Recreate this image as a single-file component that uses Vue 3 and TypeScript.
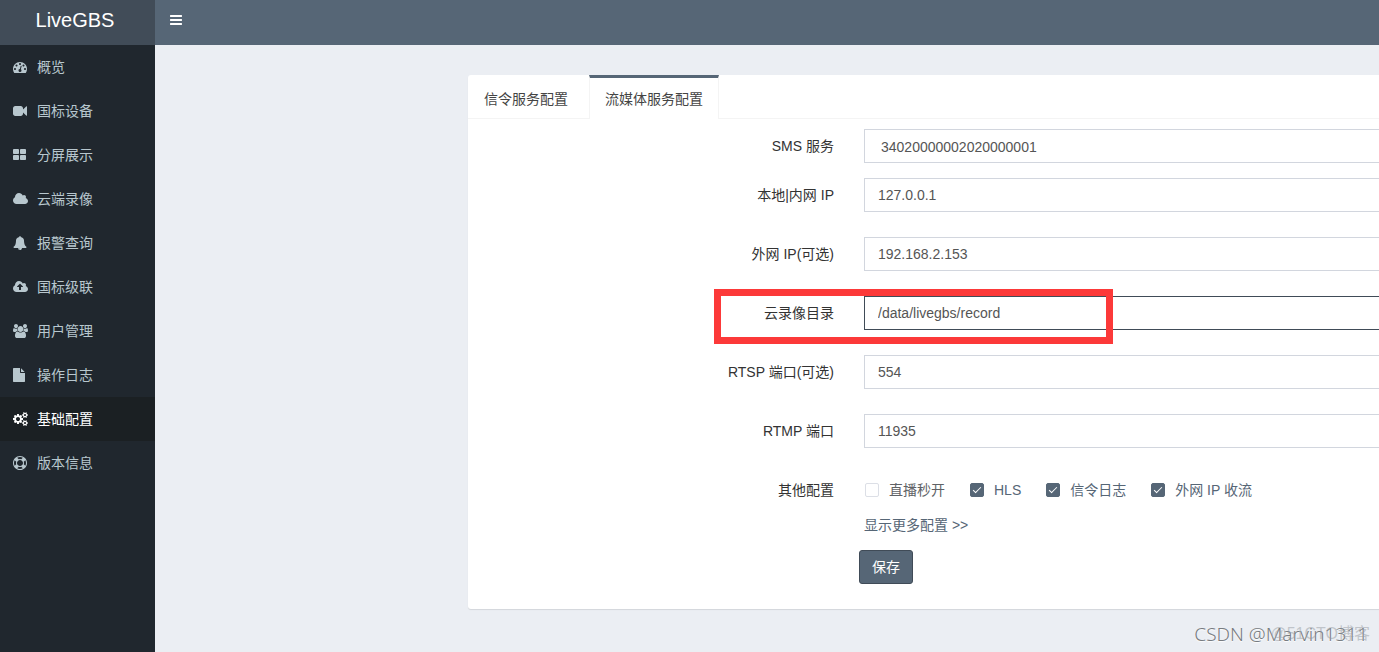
<script setup lang="ts">
import { reactive, ref } from 'vue'

interface MenuItem {
  label: string
  viewBox: string
  width: number
  path: string
}

const cloud =
  'M1984 1152q0 159-112.5 271.5t-271.5 112.5h-1088q-185 0-316.5-131.5t-131.5-316.5q0-132 71-241.5t187-163.5q-2-28-2-43 0-212 150-362t362-150q158 0 286.5 88t187.5 230q70-62 166-62 106 0 181 75t75 181q0 75-41 138 129 30 213 134.5t84 239.5z'
const smallCog =
  'v140q0 16-149 31-12 27-30 52 51 113 51 138 0 4-4 7-122 71-124 71-8 0-46-47t-52-68q-20 2-30 2t-30-2q-14 21-52 68t-46 47q-2 0-124-71-4-3-4-7 0-25 51-138-18-25-30-52-149-15-149-31v-140q0-16 149-31 13-29 30-52-51-113-51-138 0-4 4-7 4-2 35-20t59-34 30-16q8 0 46 46.500t52 67.500q20-2 30-2t30 2q51-71 92-112l6-2q4 0 124 70 4 3 4 7 0 25-51 138 17 23 30 52 149 15 149 31z'

const menu: MenuItem[] = [
  {
    label: '概览',
    viewBox: '0 0 1792 1792',
    width: 14,
    path: 'M384 1152q0-53-37.5-90.5t-90.5-37.5-90.5 37.5-37.5 90.5 37.5 90.5 90.5 37.5 90.5-37.5 37.5-90.5zm192-448q0-53-37.5-90.5t-90.5-37.5-90.5 37.5-37.5 90.5 37.5 90.5 90.5 37.5 90.5-37.5 37.5-90.5zm428 481l101-382q6-26-7.5-48.5t-38.5-29.5-48 6.5-30 39.5l-101 382q-60 5-107 43.5t-63 98.5q-20 77 20 146t117 89 146-20 89-117q16-60-6-117t-72-91zm660-33q0-53-37.5-90.5t-90.5-37.5-90.5 37.5-37.5 90.5 37.5 90.5 90.5 37.5 90.5-37.5 37.5-90.5zm-640-640q0-53-37.5-90.5t-90.5-37.5-90.5 37.5-37.5 90.5 37.5 90.5 90.5 37.5 90.5-37.5 37.5-90.5zm448 192q0-53-37.5-90.5t-90.5-37.5-90.5 37.5-37.5 90.5 37.5 90.5 90.5 37.5 90.5-37.5 37.5-90.5zm320 448q0 261-141 483-19 29-54 29h-1402q-35 0-54-29-141-221-141-483 0-182 71-348t191-286 286-191 348-71 348 71 286 191 191 286 71 348z',
  },
  {
    label: '国标设备',
    viewBox: '0 0 1792 1792',
    width: 14,
    path: 'M1792 352v1088q0 42-39 59-13 5-25 5-27 0-45-19l-403-403v166q0 119-84.5 203.5t-203.5 84.5h-704q-119 0-203.5-84.5t-84.5-203.5v-704q0-119 84.5-203.5t203.5-84.5h704q119 0 203.5 84.5t84.5 203.5v165l403-402q18-19 45-19 12 0 25 5 39 17 39 59z',
  },
  {
    label: '分屏展示',
    viewBox: '64 0 1792 1792',
    width: 14,
    path: 'M832 1024v384q0 52-38 90t-90 38h-512q-52 0-90-38t-38-90v-384q0-52 38-90t90-38h512q52 0 90 38t38 90zm0-768v384q0 52-38 90t-90 38h-512q-52 0-90-38t-38-90v-384q0-52 38-90t90-38h512q52 0 90 38t38 90zm896 768v384q0 52-38 90t-90 38h-512q-52 0-90-38t-38-90v-384q0-52 38-90t90-38h512q52 0 90 38t38 90zm0-768v384q0 52-38 90t-90 38h-512q-52 0-90-38t-38-90v-384q0-52 38-90t90-38h512q52 0 90 38t38 90z',
  },
  { label: '云端录像', viewBox: '64 0 1920 1792', width: 15, path: cloud },
  {
    label: '报警查询',
    viewBox: '0 0 1792 1792',
    width: 14,
    path: 'M912 1696q0-16-16-16-59 0-101.5-42.5t-42.5-101.5q0-16-16-16t-16 16q0 73 51.5 124.5t124.5 51.5q16 0 16-16zm816-288q0 52-38 90t-90 38h-448q0 106-75 181t-181 75-181-75-75-181h-448q-52 0-90-38t-38-90q50-42 91-88t85-119.5 74.5-158.5 50-206 19.5-260q0-152 117-282.5t307-158.5q-8-19-8-39 0-40 28-68t68-28 68 28 28 68q0 20-8 39 190 28 307 158.5t117 282.5q0 139 19.5 260t50 206 74.5 158.5 85 119.5 91 88z',
  },
  {
    label: '国标级联',
    viewBox: '64 0 1920 1792',
    width: 15,
    path:
      'M1344 864q0-14-9-23l-352-352q-9-9-23-9t-23 9l-351 351q-10 12-10 24 0 14 9 23t23 9h224v352q0 13 9.5 22.5t22.5 9.5h192q13 0 22.5-9.5t9.5-22.5v-352h224q13 0 22.5-9.5t9.5-22.5z' +
      cloud,
  },
  {
    label: '用户管理',
    viewBox: '64 0 1920 1792',
    width: 15,
    path: 'M657 896q-162 5-265 128h-134q-82 0-138-40.5t-56-118.5q0-353 124-353 6 0 43.5 21t97.5 42.5 119 21.5q67 0 133-23-5 37-5 66 0 139 81 256zm1071 637q0 120-73 189.5t-194 69.5h-874q-121 0-194-69.5t-73-189.5q0-53 3.5-103.5t14-109 26.5-108.5 43-97.5 62-81 85.5-53.5 111.5-20q10 0 43 21.5t73 48 107 48 135 21.5 135-21.5 107-48 73-48 43-21.5q61 0 111.5 20t85.5 53.5 62 81 43 97.5 26.5 108.5 14 109 3.5 103.5zm-1024-1277q0 106-75 181t-181 75-181-75-75-181 75-181 181-75 181 75 75 181zm704 384q0 159-112.5 271.5t-271.5 112.5-271.5-112.5-112.5-271.5 112.5-271.5 271.5-112.5 271.5 112.5 112.5 271.5zm576 225q0 78-56 118.5t-138 40.5h-134q-103-123-265-128 81-117 81-256 0-29-5-66 66 23 133 23 59 0 119-21.5t97.5-42.5 43.5-21q124 0 124 353zm-128-609q0 106-75 181t-181 75-181-75-75-181 75-181 181-75 181 75 75 181z',
  },
  {
    label: '操作日志',
    viewBox: '128 0 1792 1792',
    width: 14,
    path: 'M1152 512v-472q22 14 36 28l408 408q14 14 28 36h-472zm-128 32q0 40 28 68t68 28h544v1056q0 40-28 68t-68 28h-1344q-40 0-68-28t-28-68v-1600q0-40 28-68t68-28h800v544z',
  },
  {
    label: '基础配置',
    viewBox: '-64 0 1920 1792',
    width: 15,
    path:
      'M832 896q0-106-75-181t-181-75-181 75-75 181 75 181 181 75 181-75 75-181zm768 512q0-52-38-90t-90-38-90 38-38 90q0 53 37.5 90.5t90.5 37.5 90.5-37.5 37.5-90.5zm0-1024q0-52-38-90t-90-38-90 38-38 90q0 53 37.5 90.5t90.5 37.5 90.5-37.5 37.5-90.5zm-384 421v185q0 10-7 19.5t-16 10.5l-155 24q-11 35-32 76 34 48 90 115 7 11 7 20 0 12-7 19-23 30-82.5 89.5t-78.5 59.5q-11 0-21-7l-115-90q-37 19-77 31-11 108-23 155-7 24-30 24h-186q-11 0-20-7.5t-10-17.5l-23-153q-34-10-75-31l-118 89q-7 7-20 7-11 0-21-8-144-133-144-160 0-9 7-19 10-14 41-53t47-61q-23-44-35-82l-152-24q-10-1-17-9.5t-7-19.5v-185q0-10 7-19.5t16-10.5l155-24q11-35 32-76-34-48-90-115-7-11-7-20 0-12 7-20 22-30 82-89t79-59q11 0 21 7l115 90q34-18 77-32 11-108 23-154 7-24 30-24h186q11 0 20 7.5t10 17.5l23 153q34 10 75 31l118-89q8-7 20-7 11 0 21 8 144 133 144 160 0 9-7 19-12 16-42 54t-45 60q23 48 34 82l152 23q10 2 17 10.5t7 19.5zM1856 1338' +
      smallCog +
      'M1856 314' +
      smallCog,
  },
  {
    label: '版本信息',
    viewBox: '0 0 1792 1792',
    width: 14,
    path: 'M896 0q182 0 348 71t286 191 191 286 71 348-71 348-191 286-286 191-348 71-348-71-286-191-191-286-71-348 71-348 191-286 286-191 348-71zm0 128q-190 0-361 90l194 194q82-28 167-28t167 28l194-194q-171-90-361-90zm-678 1129l194-194q-28-82-28-167t28-167l-194-194q-90 171-90 361t90 361zm678 407q190 0 361-90l-194-194q-82 28-167 28t-167-28l-194 194q171 90 361 90zm0-384q159 0 271.5-112.5t112.5-271.5-112.5-271.5-271.5-112.5-271.5 112.5-112.5 271.5 112.5 271.5 271.5 112.5zm484-217l194 194q90-171 90-361t-90-361l-194 194q28 82 28 167t-28 167z',
  },
]

const activeMenu = ref('基础配置')
const tabs = ['信令服务配置', '流媒体服务配置']
const activeTab = ref('流媒体服务配置')
const sms = ref('34020000002020000001')

const fields = reactive([
  { id: 'lan', label: '本地|内网 IP', value: '127.0.0.1', marked: false },
  { id: 'wan', label: '外网 IP(可选)', value: '192.168.2.153', marked: false },
  { id: 'record', label: '云录像目录', value: '/data/livegbs/record', marked: true },
  { id: 'rtsp', label: 'RTSP 端口(可选)', value: '554', marked: false },
  { id: 'rtmp', label: 'RTMP 端口', value: '11935', marked: false },
])

const options = reactive([
  { label: '直播秒开', on: false },
  { label: 'HLS', on: true },
  { label: '信令日志', on: true },
  { label: '外网 IP 收流', on: true },
])
</script>

<template>
  <div class="app">
    <header class="header">
      <a class="brand" href="#">LiveGBS</a>
      <button class="toggle" type="button" aria-label="菜单">
        <svg viewBox="128 0 1536 1792" width="12" height="14" fill="currentColor">
          <path d="M1664 1344v128q0 26-19 45t-45 19h-1408q-26 0-45-19t-19-45v-128q0-26 19-45t45-19h1408q26 0 45 19t19 45zm0-512v128q0 26-19 45t-45 19h-1408q-26 0-45-19t-19-45v-128q0-26 19-45t45-19h1408q26 0 45 19t19 45zm0-512v128q0 26-19 45t-45 19h-1408q-26 0-45-19t-19-45v-128q0-26 19-45t45-19h1408q26 0 45 19t19 45z" />
        </svg>
      </button>
    </header>

    <div class="body">
      <nav class="sidebar">
        <a
          v-for="item in menu"
          :key="item.label"
          class="item"
          :class="{ active: item.label === activeMenu }"
          href="#"
          @click.prevent="activeMenu = item.label"
        >
          <span class="icon">
            <svg :viewBox="item.viewBox" :width="item.width" height="14" fill="currentColor" fill-rule="evenodd">
              <path :d="item.path" />
            </svg>
          </span>
          <span>{{ item.label }}</span>
        </a>
      </nav>

      <main class="content">
        <section class="card">
          <div class="tabs" role="tablist">
            <button
              v-for="tab in tabs"
              :key="tab"
              class="tab"
              :class="{ current: tab === activeTab }"
              type="button"
              role="tab"
              :aria-selected="tab === activeTab"
              @click="activeTab = tab"
            >{{ tab }}</button>
          </div>

          <form class="form" @submit.prevent>
            <div class="row compact">
              <label class="label" for="sms">SMS 服务</label>
              <select id="sms" v-model="sms" class="control select">
                <option>34020000002020000001</option>
              </select>
            </div>
            <div v-for="field in fields" :key="field.id" class="row">
              <label class="label" :for="field.id">{{ field.label }}</label>
              <input :id="field.id" v-model="field.value" class="control" :class="{ focused: field.marked }" type="text" />
              <span v-if="field.marked" class="marker"></span>
            </div>
            <div class="row last">
              <span id="others" class="label">其他配置</span>
              <div class="checks" role="group" aria-labelledby="others">
                <label v-for="option in options" :key="option.label" class="check" :class="{ on: option.on }">
                  <input v-model="option.on" type="checkbox" />
                  <span>{{ option.label }}</span>
                </label>
              </div>
            </div>
            <a class="more" href="#">显示更多配置 &gt;&gt;</a>
            <button class="save" type="submit">保存</button>
          </form>
        </section>
      </main>
    </div>

    <div class="watermark">CSDN @Marvin1311</div>
    <div class="watermark faint">@51CTO博客</div>
  </div>
</template>

<style>
body {
  margin: 0;
  overflow: hidden;
}
</style>

<style scoped>
.app {
  position: relative;
  display: flex;
  flex-direction: column;
  min-height: 100vh;
  overflow: hidden;
  background: #ebeef3;
  color: #333;
  font: 14px/20px 'Liberation Sans', 'Noto Sans CJK SC', sans-serif;
}
.app * {
  box-sizing: border-box;
}
button,
input,
select {
  margin: 0;
  font: inherit;
}
a {
  color: inherit;
  text-decoration: none;
}
.header {
  display: flex;
  height: 45px;
  background: #566676;
  color: #fff;
}
.brand {
  width: 155px;
  padding-right: 5px;
  background: #414c58;
  font-size: 20px;
  line-height: 40px;
  text-align: center;
}
.toggle {
  display: flex;
  align-items: center;
  height: 40px;
  padding: 0 15px;
  border: 0;
  background: none;
  color: #fff;
}
.body {
  display: flex;
  flex: 1;
}
.sidebar {
  flex: none;
  width: 155px;
  background: #20272e;
}
.item {
  display: flex;
  align-items: center;
  height: 44px;
  padding-left: 13px;
  color: #b8c7ce;
}
.item.active {
  background: #1b2023;
  color: #fff;
}
.icon {
  display: flex;
  width: 24px;
}
.content {
  flex: 1;
  min-width: 0;
  padding: 30px 0 42px 313px;
}
.card {
  margin-right: -40px;
  border-radius: 3px;
  background: #fff;
  box-shadow: 0 1px 1px rgba(0, 0, 0, 0.1);
}
.tabs {
  display: flex;
  height: 44px;
  border-bottom: 1px solid #f4f4f4;
}
.tab {
  height: 44px;
  padding: 0 15px;
  border: 1px solid transparent;
  border-top: 3px solid transparent;
  border-bottom: 0;
  background: none;
  color: #444;
  line-height: 20px;
}
.tab + .tab {
  margin-left: 5px;
}
.tab.current {
  border-color: #566676 #f4f4f4;
  background: #fff;
}
.form {
  padding: 10px 0 25px;
}
.row {
  position: relative;
  display: grid;
  grid-template-columns: 366px 1fr;
  column-gap: 30px;
  margin-bottom: 25px;
  line-height: 34px;
}
.row.compact {
  margin-bottom: 15px;
}
.row.last {
  margin-bottom: 8px;
}
.label {
  text-align: right;
}
.control {
  width: 100%;
  height: 34px;
  padding: 0 13px;
  border: 1px solid #d2d6de;
  border-radius: 0;
  outline: 0;
  background: #fff;
  color: #555;
}
.select {
  padding: 0 16px 2px;
  appearance: none;
}
.control.focused {
  border-color: #404b57;
}
.marker {
  position: absolute;
  top: -7px;
  left: 246px;
  width: 399px;
  height: 55px;
  border: 7px solid #fc3939;
  pointer-events: none;
}
.checks {
  display: flex;
  gap: 25px;
  padding-left: 1px;
}
.check {
  display: flex;
  align-items: center;
  gap: 10px;
  color: #606266;
}
.check.on {
  color: #566676;
}
.check input {
  position: relative;
  width: 14px;
  height: 14px;
  border: 1px solid #dcdfe6;
  border-radius: 2px;
  appearance: none;
  background: #fff;
}
.check input:checked {
  border-color: #566676;
  background: #566676;
}
.check input:checked::after {
  content: '';
  position: absolute;
  top: 1px;
  left: 4px;
  width: 3px;
  height: 7px;
  border: 1px solid #fff;
  border-top: 0;
  border-left: 0;
  transform: rotate(45deg);
}
.more {
  display: block;
  width: fit-content;
  margin-left: 396px;
  color: #566676;
}
.save {
  display: block;
  height: 34px;
  margin: 15px 0 0 391px;
  padding: 0 12px;
  border: 1px solid #404b57;
  border-radius: 3px;
  background: #566676;
  color: #fff;
}
.watermark {
  position: absolute;
  right: 11px;
  bottom: 6px;
  color: #777b80;
  font: 300 19px/24px 'Noto Sans', 'Noto Sans CJK SC', sans-serif;
  text-shadow: 0 1px 1px #fff;
  pointer-events: none;
}
.watermark.faint {
  right: 9px;
  color: rgba(150, 155, 162, 0.5);
  font: 16px/24px 'Liberation Sans', 'Noto Sans CJK SC', sans-serif;
  text-shadow: none;
}
</style>
